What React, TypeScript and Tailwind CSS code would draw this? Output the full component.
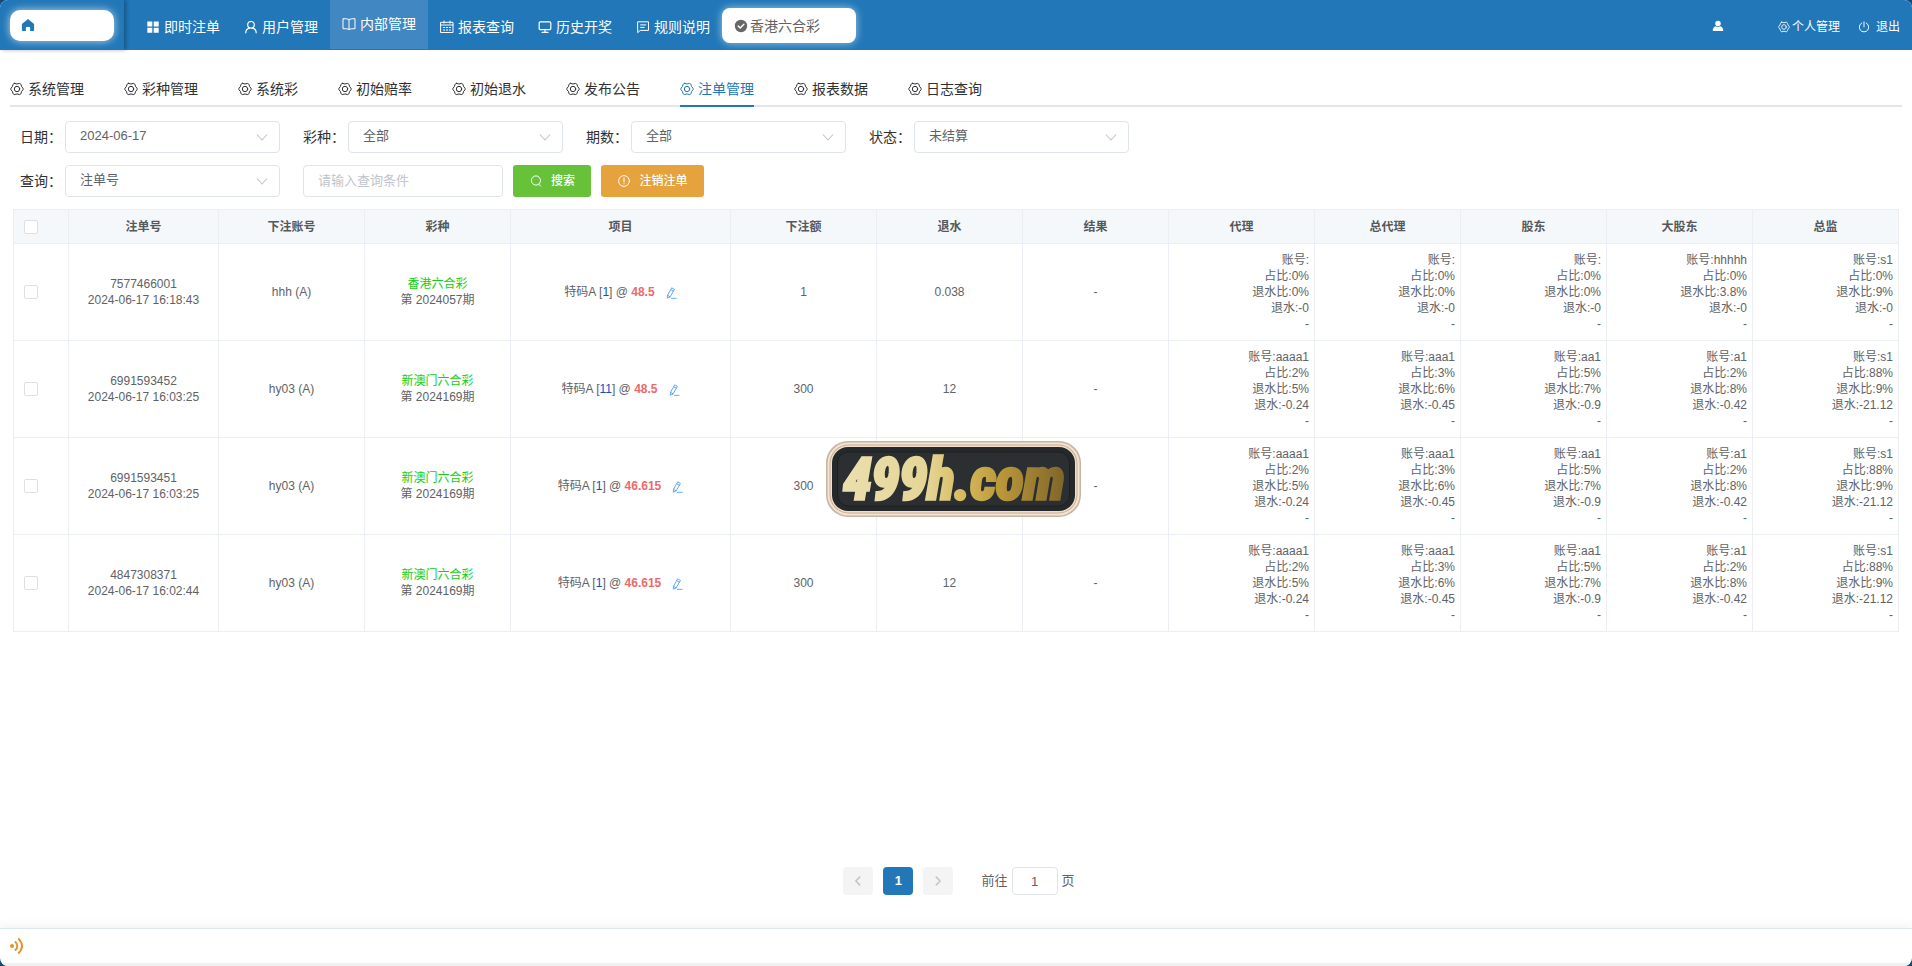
import React from "react";

const gearPath =
  "M4.300 1.400Q7 2.700 9.700 1.400Q10.700 1.600 11 2.600Q11.300 4.900 13 6.200Q13.400 7 13 7.800Q11.300 9.100 11 11.400Q10.700 12.400 9.700 12.600Q7 11.300 4.300 12.600Q3.300 12.400 3 11.400Q2.700 9.100 1 7.800Q.600 7 1 6.200Q2.700 4.900 3 2.600Q3.300 1.600 4.300 1.400Z";

function Svg({ children, className = "size-3.5" }: { children: React.ReactNode; className?: string }) {
  return (
    <svg
      viewBox="0 0 14 14"
      className={`shrink-0 ${className}`}
      fill="none"
      stroke="currentColor"
      strokeWidth="1"
      strokeLinejoin="round"
      strokeLinecap="round"
      aria-hidden="true"
    >
      {children}
    </svg>
  );
}

const Gear = ({ className }: { className?: string }) => (
  <Svg className={className}>
    <path d={gearPath} />
    <circle cx="7" cy="7" r="2.700" />
  </Svg>
);

const GridIcon = () => (
  <Svg>
    <path d="M1.3 1.5h5v5h-5zM7.7 1.5h5v5h-5zM1.3 7.7h5v5h-5zM7.7 7.7h5v5h-5z" fill="currentColor" stroke="none" />
  </Svg>
);

const UserIcon = () => (
  <Svg>
    <circle cx="7" cy="4.8" r="3.3" strokeWidth="1.2" />
    <path d="M1.8 12.8c0-2.6 1.6-4.2 3.6-4.7M12.2 12.8c0-2.6-1.6-4.2-3.6-4.7" strokeWidth="1.2" />
  </Svg>
);

const BookIcon = () => (
  <Svg>
    <path d="M7 2.6v9.8M7 2.6C6 1.9 4 1.7 1 1.7v10c3 0 5 .1 6 .8 1-.7 3-.8 6-.8v-10c-3 0-5 .2-6 .9" />
  </Svg>
);

const DateIcon = () => (
  <Svg>
    <path d="M1 2.3h12v10.2H1zM1 5h12M4 1v2.2M10 1v2.2M3.5 7.5h1.2M6.4 7.5h1.2M9.3 7.5h1.2M3.5 10h1.2M6.4 10h1.2M9.3 10h1.2" />
  </Svg>
);

const MonitorIcon = () => (
  <Svg>
    <path d="M2.2 1.9h9.6q1 0 1 1v5.7q0 1-1 1H2.2q-1 0-1-1V2.9q0-1 1-1zM7 9.8v2.4M4 12.4h6" strokeWidth="1.2" />
  </Svg>
);

const ChatIcon = () => (
  <Svg>
    <path d="M2 1.8h10.5v8.6H4.2L2 12.4zM4.6 4.9h5.2M4.6 7.4h3.6" />
  </Svg>
);

const PowerIcon = () => (
  <Svg className="size-3">
    <path d="M7 1v5.8M4.4 2.3a5.5 5.5 0 1 0 5.2 0" strokeWidth="1.1" />
  </Svg>
);

const EditIcon = () => (
  <Svg className="size-3">
    <path d="M8.2 1.2 11 2.8 5.9 11.6 2.6 13l.5-3.2zM7 3.3l2.8 1.6M3.3 9.8l2.6 1.7M7.5 13.2H13" />
  </Svg>
);

const navItems = [
  { label: "即时注单", icon: <GridIcon /> },
  { label: "用户管理", icon: <UserIcon /> },
  { label: "内部管理", icon: <BookIcon />, active: true },
  { label: "报表查询", icon: <DateIcon /> },
  { label: "历史开奖", icon: <MonitorIcon /> },
  { label: "规则说明", icon: <ChatIcon /> },
];

const tabs = ["系统管理", "彩种管理", "系统彩", "初始赔率", "初始退水", "发布公告", "注单管理", "报表数据", "日志查询"];

const columns = ["注单号", "下注账号", "彩种", "项目", "下注额", "退水", "结果", "代理", "总代理", "股东", "大股东", "总监"];

type Level = [account: string, share: string, rate: string, rebate: string];

interface Bet {
  id: string;
  time: string;
  account: string;
  lottery: string;
  issue: string;
  pick: string;
  odds: string;
  amount: string;
  rebate: string;
  levels: Level[];
}

const hyLevels: Level[] = [
  ["aaaa1", "2%", "5%", "-0.24"],
  ["aaa1", "3%", "6%", "-0.45"],
  ["aa1", "5%", "7%", "-0.9"],
  ["a1", "2%", "8%", "-0.42"],
  ["s1", "88%", "9%", "-21.12"],
];

const hyBet = { account: "hy03 (A)", lottery: "新澳门六合彩", issue: "2024169", amount: "300", rebate: "12", levels: hyLevels };

const bets: Bet[] = [
  {
    id: "7577466001",
    time: "2024-06-17 16:18:43",
    account: "hhh (A)",
    lottery: "香港六合彩",
    issue: "2024057",
    pick: "1",
    odds: "48.5",
    amount: "1",
    rebate: "0.038",
    levels: [
      ["", "0%", "0%", "-0"],
      ["", "0%", "0%", "-0"],
      ["", "0%", "0%", "-0"],
      ["hhhhh", "0%", "3.8%", "-0"],
      ["s1", "0%", "9%", "-0"],
    ],
  },
  { ...hyBet, id: "6991593452", time: "2024-06-17 16:03:25", pick: "11", odds: "48.5" },
  { ...hyBet, id: "6991593451", time: "2024-06-17 16:03:25", pick: "1", odds: "46.615" },
  { ...hyBet, id: "4847308371", time: "2024-06-17 16:02:44", pick: "1", odds: "46.615" },
];

function Field({ id, label, value }: { id: string; label: string; value: string }) {
  return (
    <div className="flex items-center">
      <label htmlFor={id} className="w-[45px] whitespace-nowrap text-sm text-[#303133]">
        {label}：
      </label>
      <div className="relative">
        <select
          id={id}
          className="h-8 w-[215px] appearance-none rounded border border-[#dfe4ea] bg-white pr-8 pb-0.5 pl-3.5 text-[13px] text-[#606266] outline-none"
        >
          <option>{value}</option>
        </select>
        <svg
          viewBox="0 0 12 12"
          className="pointer-events-none absolute top-2.5 right-3 size-3"
          fill="none"
          stroke="#c0c4cc"
          strokeWidth="1.1"
          aria-hidden="true"
        >
          <path d="M1 3.5 6 9l5-5.5" />
        </svg>
      </div>
    </div>
  );
}

function Checkbox({ label }: { label: string }) {
  return (
    <input
      type="checkbox"
      aria-label={label}
      className="block size-3.5 appearance-none rounded-xs border border-[#dcdfe6] bg-white checked:bg-[#2177b8]"
    />
  );
}

const cell = "border-r border-b border-[#ebeef5]";

function BetRow({ bet }: { bet: Bet }) {
  return (
    <tr>
      <td className={`${cell} pl-2.5`}>
        <Checkbox label={bet.id} />
      </td>
      <td className={cell}>
        {bet.id}
        <br />
        {bet.time}
      </td>
      <td className={cell}>{bet.account}</td>
      <td className={cell}>
        <span className="text-[#13ce13]">{bet.lottery}</span>
        <br />第 {bet.issue}期
      </td>
      <td className={cell}>
        <div className="flex items-center justify-center gap-2.5">
          <span>
            特码A [<span className="text-[#0d50c4]">{bet.pick}</span>] @{" "}
            <b className="text-[#ec6a6a]">{bet.odds}</b>
          </span>
          <button type="button" aria-label="编辑" className="pt-0.5 text-[#409eff]">
            <EditIcon />
          </button>
        </div>
      </td>
      <td className={cell}>{bet.amount}</td>
      <td className={cell}>{bet.rebate}</td>
      <td className={cell}>-</td>
      {bet.levels.map(([account, share, rate, rebate], i) => (
        <td key={i} className={`${cell} py-2 pr-[5px] text-right`}>
          账号:{account}
          <br />
          占比:{share}
          <br />
          退水比:{rate}
          <br />
          退水:{rebate}
          <br />-
        </td>
      ))}
    </tr>
  );
}

function SiteBadge() {
  return (
    <div className="pointer-events-none fixed inset-0 flex items-center justify-center pr-1 pb-2">
      <svg viewBox="0 0 258 78" className="h-[78px] w-[258px]" role="img" aria-label="499h.com">
        <defs>
          <linearGradient id="gold" x1="0" y1="0" x2="1" y2="0">
            <stop offset="0" stopColor="#ecdfaf" />
            <stop offset="0.38" stopColor="#e5d596" />
            <stop offset="0.55" stopColor="#d5b95c" />
            <stop offset="0.7" stopColor="#bc9a3a" />
            <stop offset="1" stopColor="#80652a" />
          </linearGradient>
        </defs>
        <rect x="1" y="1" width="255" height="76" rx="22" fill="#c9b5a3" />
        <rect x="2.500" y="2.500" width="252" height="73" rx="21" fill="#f3e4d2" />
        <rect x="4.500" y="4.500" width="248" height="69" rx="19" fill="#c8ad94" />
        <rect x="5.500" y="5.500" width="246" height="67" rx="18" fill="#efdfcb" />
        <rect x="7" y="7" width="243" height="64" rx="16" fill="#26292c" />
        <rect x="12.500" y="12" width="232" height="54" rx="11" fill="#2c2f31" stroke="#1d2022" />
        <g
          fontFamily="'Liberation Sans Narrow', 'Roboto Condensed', 'Liberation Sans', sans-serif"
          fontSize="57"
          fontWeight="700"
          fontStyle="italic"
          textAnchor="middle"
        >
          <text x="129" y="59" fill="url(#gold)" stroke="url(#gold)" strokeWidth="3.500">
            499h.com
          </text>
        </g>
      </svg>
    </div>
  );
}

export default function App() {
  return (
    <div className="min-h-screen bg-[#124a78] font-['Liberation_Sans','Noto_Sans_CJK_SC',sans-serif]">
      <div className="flex min-h-screen flex-col overflow-hidden rounded-lg bg-white">
        <header className="flex h-[50px] bg-[#2177b8] text-white">
          <div className="flex w-[124px] items-center pl-2.5 shadow-[2px_0_4px_rgba(0,0,0,0.3)]">
            <a
              href="#home"
              aria-label="首页"
              className="flex h-[31px] w-[104px] items-center rounded-[10px] bg-white pl-[11px] text-[#2177b8] shadow-[0_0_8px_rgba(255,255,255,0.7)]"
            >
              <Svg>
                <path d="M7 .9.9 6v6.300q0 .7.7.7h3.300V9.600q0-.7.7-.7h2.800q.7 0 .7.7V13h3.300q.7 0 .7-.7V6z" fill="currentColor" stroke="none" />
              </Svg>
            </a>
          </div>
          <nav className="flex pl-2.5">
            {navItems.map((item) => (
              <a
                key={item.label}
                href="#nav"
                className={
                  item.active
                    ? "flex h-[49px] items-center gap-1 bg-[#4187c1] px-3 pb-0.5 text-sm"
                    : "flex items-center gap-1 px-3 pt-1 text-sm"
                }
              >
                {item.icon}
                {item.label}
              </a>
            ))}
          </nav>
          <button
            type="button"
            className="mt-2 flex h-[35px] w-[134px] items-center gap-0.5 rounded-lg bg-white pl-3 text-sm text-[#606266] shadow-[0_0_8px_rgba(255,255,255,0.6)]"
          >
            <Svg>
              <circle cx="7" cy="7" r="6.2" fill="#666" stroke="none" />
              <path d="m4.2 7.1 2 2 3.7-3.9" stroke="#fff" strokeWidth="1.4" />
            </Svg>
            香港六合彩
          </button>
          <div className="ml-auto flex items-center pt-1 pr-3 text-xs">
            <span className="mr-[54px] pb-0.5">
              <Svg className="size-3">
                <path d="M7 1a3.200 3.200 0 1 1 0 6.400A3.200 3.200 0 0 1 7 1zM4.500 7.400Q7 9 9.500 7.400q3.600 1 3.600 5.400H.9q0-4.400 3.600-5.400z" fill="currentColor" stroke="none" />
              </Svg>
            </span>
            <a href="#profile" className="mr-[18px] flex items-center gap-0.5">
              <Gear className="size-3" />
              个人管理
            </a>
            <a href="#logout" className="flex items-center gap-1.5">
              <PowerIcon />
              退出
            </a>
          </div>
        </header>

        <main className="flex grow flex-col">
          <nav className="mx-2.5 mt-[22px] flex h-[35px] gap-10 border-b-2 border-[#e4e5e7] text-sm text-[#303133]">
            {tabs.map((tab) => (
              <a
                key={tab}
                href="#tab"
                className={
                  tab === "注单管理"
                    ? "-mb-0.5 flex items-center gap-1 border-b-2 border-[#2177b8] text-[#2177b8]"
                    : "flex items-center gap-1"
                }
              >
                <Gear />
                {tab}
              </a>
            ))}
          </nav>

          <form className="mt-3.5 flex flex-col gap-3 pl-5" onSubmit={(e) => e.preventDefault()}>
            <div className="flex gap-[23px]">
              <Field id="date" label="日期" value="2024-06-17" />
              <Field id="lottery" label="彩种" value="全部" />
              <Field id="issue" label="期数" value="全部" />
              <Field id="status" label="状态" value="未结算" />
            </div>
            <div className="flex">
              <Field id="query" label="查询" value="注单号" />
              <input
                type="text"
                aria-label="查询条件"
                placeholder="请输入查询条件"
                className="ml-[23px] h-8 w-[200px] rounded border border-[#dfe4ea] px-3.5 pb-0.5 text-[13px] outline-none placeholder:text-[#c0c4cc]"
              />
              <button
                type="submit"
                className="ml-2.5 flex h-8 w-[78px] items-center justify-center gap-2 rounded-[3px] bg-[#67c23a] text-xs font-medium text-white"
              >
                <Svg>
                  <circle cx="7" cy="6.500" r="4.600" />
                  <path d="m9.800 10.200 1.800 1.900" />
                </Svg>
                搜索
              </button>
              <button
                type="button"
                className="ml-2.5 flex h-8 w-[103px] items-center justify-center gap-2 rounded-[3px] bg-[#e6a23c] text-xs font-medium text-white"
              >
                <Svg>
                  <circle cx="7" cy="7" r="5.400" />
                  <path d="M7 4v4M7 9.700v.3" />
                </Svg>
                注销注单
              </button>
            </div>
          </form>

          <div className="mx-[13px] mt-3">
            <table className="w-full table-fixed border-separate border-spacing-0 border-t border-l border-[#ebeef5] text-center text-xs text-[#606266]">
              <colgroup>
                <col className="w-[55px]" />
                <col className="w-[150px]" />
                <col className="w-[146px]" />
                <col className="w-[146px]" />
                <col className="w-[220px]" />
                <col span={8} className="w-[146px]" />
              </colgroup>
              <thead>
                <tr className="h-[34px] bg-[#f4f8fb] text-[#56585c]">
                  <th className={`${cell} pl-2.5`}>
                    <Checkbox label="全选" />
                  </th>
                  {columns.map((name) => (
                    <th key={name} className={`${cell} font-bold`}>
                      {name}
                    </th>
                  ))}
                </tr>
              </thead>
              <tbody>
                {bets.map((bet) => (
                  <BetRow key={bet.id} bet={bet} />
                ))}
              </tbody>
            </table>
          </div>

          <div className="mt-auto mb-[33px] flex items-center justify-center pt-6 pl-1.5 text-[13px] text-[#606266]">
            <div className="flex gap-2.5">
              <button type="button" aria-label="上一页" className="flex h-7 w-[30px] items-center justify-center rounded-sm bg-[#f4f4f5] text-[#c0c4cc]">
                <Svg className="size-3">
                  <path d="M9 2.500 4.500 7 9 11.500" strokeWidth="1.800" />
                </Svg>
              </button>
              <button type="button" className="h-7 w-[30px] rounded-sm bg-[#2177b8] font-bold text-white">
                1
              </button>
              <button type="button" aria-label="下一页" className="flex h-7 w-[30px] items-center justify-center rounded-sm bg-[#f4f4f5] text-[#c0c4cc]">
                <Svg className="size-3">
                  <path d="M5 2.500 9.500 7 5 11.500" strokeWidth="1.800" />
                </Svg>
              </button>
            </div>
            <label className="ml-7 flex items-center gap-1">
              前往
              <input type="text" defaultValue="1" className="h-7 w-[46px] rounded border border-[#dfe4ea] text-center outline-none" />
              页
            </label>
          </div>
        </main>

        <footer className="flex h-[38px] items-center border-t border-b-3 border-t-[#dbe8ee] border-b-[#f0f0f0] pl-2.5 text-[#e8912a] shadow-[0_-2px_10px_rgba(0,0,0,0.06)]">
          <svg viewBox="0 0 14 18" className="h-[18px] w-3.5" fill="none" stroke="currentColor" strokeWidth="1.900" aria-hidden="true">
            <circle cx="2" cy="9" r="2" fill="currentColor" stroke="none" />
            <path d="M5 4.300q4.600 4.700 0 9.400M8.200 1.300q7.600 7.700 0 15.400" />
          </svg>
        </footer>
      </div>
      <SiteBadge />
    </div>
  );
}
